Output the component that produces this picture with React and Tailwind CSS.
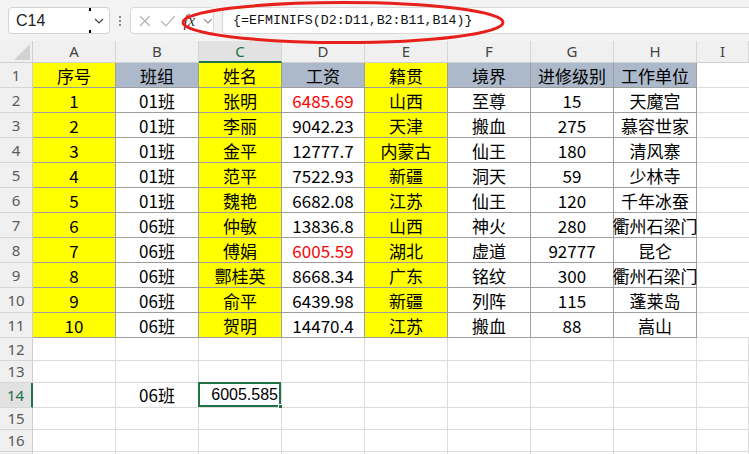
import React from "react";

const cjk = { fontFamily: '"Noto Sans CJK SC", "Noto Sans", sans-serif' };

const data = [
  ["序号", "班组", "姓名", "工资", "籍贯", "境界", "进修级别", "工作单位"],
  ["1", "01班", "张明", "6485.69", "山西", "至尊", "15", "天魔宫"],
  ["2", "01班", "李丽", "9042.23", "天津", "搬血", "275", "慕容世家"],
  ["3", "01班", "金平", "12777.7", "内蒙古", "仙王", "180", "清风寨"],
  ["4", "01班", "范平", "7522.93", "新疆", "洞天", "59", "少林寺"],
  ["5", "01班", "魏艳", "6682.08", "江苏", "仙王", "120", "千年冰蚕"],
  ["6", "06班", "仲敏", "13836.8", "山西", "神火", "280", "衢州石梁门"],
  ["7", "06班", "傅娟", "6005.59", "湖北", "虚道", "92777", "昆仑"],
  ["8", "06班", "酆桂英", "8668.34", "广东", "铭纹", "300", "衢州石梁门"],
  ["9", "06班", "俞平", "6439.98", "新疆", "列阵", "115", "蓬莱岛"],
  ["10", "06班", "贺明", "14470.4", "江苏", "搬血", "88", "嵩山"],
];

const letters = ["A", "B", "C", "D", "E", "F", "G", "H", "I"];
const yellowCols = [0, 2, 4];

// background for table cells
const cellBg = (r, c) => {
  if (yellowCols.includes(c)) return "bg-[#ffff00]";
  if (r === 0) return "bg-[#acb9ca]";
  return "bg-white";
};

const RowHead = ({ n, h, active }) => (
  <div
    className={`w-[33px] shrink-0 ${h} flex items-center justify-center text-[15px] border-b border-[#d6d6d6] ${
      active
        ? "bg-[#e2e2e2] text-[#217346] border-r-2 border-r-[#217346]"
        : "bg-[#f0f0f0] text-[#5a5a5a] border-r border-r-[#cfcfcf]"
    }`}
    style={{ fontFamily: '"Noto Sans", sans-serif' }}
  >
    {n}
  </div>
);

const TableRow = ({ r }) => (
  <div className="flex h-[25px]">
    <RowHead n={r + 1} h="h-[25px]" />
    {data[r].map((t, c) => (
      <div
        key={c}
        className={`w-[83px] shrink-0 h-full flex items-center justify-center whitespace-nowrap text-[17px] leading-none border-r border-b border-[#9e9e9e] ${cellBg(r, c)} ${
          c === 3 && (r === 1 || r === 7) ? "text-[#ff0000]" : "text-black"
        }`}
      >
        {t}
      </div>
    ))}
    <div className="flex-1 h-full bg-white border-b border-[#dcdcdc]" />
  </div>
);

const EmptyRow = ({ n, h, children }) => (
  <div className={`flex ${h}`}>
    <RowHead n={n} h={h} active={n === 14} />
    {letters.map((l, c) => (
      <div
        key={l}
        className={`${c === 8 ? "flex-1" : "w-[83px] shrink-0"} relative h-full bg-white border-r border-b border-[#dcdcdc] flex items-center`}
      >
        {children && children[c]}
      </div>
    ))}
  </div>
);

export default function App() {
  return (
    <div className="w-[749px] h-[454px] overflow-hidden bg-white relative" style={cjk}>
      {/* formula bar */}
      <div className="h-[41px] bg-[#f3f3f3] flex items-center pl-[8px] gap-[8px] relative">
        <div className="w-[102px] h-[27px] bg-white border border-[#d2d2d2] rounded-[4px] flex items-center">
          <span className="flex-1 pl-[7px] text-[16px] text-[#222]" style={{ fontFamily: '"Liberation Sans", sans-serif' }}>
            C14
          </span>
          <div className="relative w-[20px] h-full flex items-center justify-center">
            <div className="absolute left-0 top-0 w-[2px] h-[3px] bg-black" />
            <div className="absolute left-0 bottom-0 w-[2px] h-[3px] bg-black" />
            <svg width="10" height="6" viewBox="0 0 10 6">
              <polyline points="1,1 5,5 9,1" fill="none" stroke="#444" strokeWidth="1.2" />
            </svg>
          </div>
        </div>
        <div className="flex flex-col gap-[2px] mx-[1px]">
          <div className="w-[2px] h-[2px] bg-[#8a8a8a]" />
          <div className="w-[2px] h-[2px] bg-[#8a8a8a]" />
          <div className="w-[2px] h-[2px] bg-[#8a8a8a]" />
        </div>
        <div className="w-[84px] h-[27px] bg-white border border-[#d9d9d9] rounded-[4px] flex items-center pl-[7px] gap-[8px]">
          <svg width="14" height="14" viewBox="0 0 14 14">
            <path d="M2 2 L12 12 M12 2 L2 12" stroke="#b4b4b4" strokeWidth="1.3" />
          </svg>
          <svg width="16" height="14" viewBox="0 0 16 14">
            <polyline points="1,7 6,12 15,2" fill="none" stroke="#b4b4b4" strokeWidth="1.3" />
          </svg>
          <span className="text-[16px] italic text-[#333] leading-none" style={{ fontFamily: '"Liberation Serif", serif' }}>
            fx
          </span>
          <svg width="10" height="6" viewBox="0 0 10 6">
            <polyline points="1,1 5,5 9,1" fill="none" stroke="#888" strokeWidth="1.1" />
          </svg>
        </div>
        <div className="flex-1 h-[27px] bg-white border-y border-l border-[#d9d9d9] rounded-l-[4px] flex items-center pl-[10px]">
          <span className="text-[13.3px] text-[#111]" style={{ fontFamily: '"Liberation Mono", monospace' }}>
            {"{=EFMINIFS(D2:D11,B2:B11,B14)}"}
          </span>
        </div>
        <svg className="absolute left-[180px] top-0" width="330" height="46" viewBox="0 0 330 46">
          <ellipse cx="163" cy="22.5" rx="160" ry="20" fill="none" stroke="#e8201c" strokeWidth="3" />
        </svg>
      </div>

      {/* column headers */}
      <div className="flex h-[22px]">
        <div className="w-[33px] shrink-0 h-full bg-[#f0f0f0] border-r border-b border-[#cfcfcf] relative">
          <svg className="absolute right-[2px] bottom-[2px]" width="16" height="16" viewBox="0 0 16 16">
            <polygon points="16,0 16,16 0,16" fill="#d2d2d2" />
          </svg>
        </div>
        {letters.map((l, c) => (
          <div
            key={l}
            className={`${c === 8 ? "flex-1" : "w-[83px] shrink-0"} h-full flex items-center justify-center text-[15px] border-r border-[#d6d6d6] ${
              c === 2
                ? "bg-[#e2e2e2] text-[#217346] border-b-2 border-b-[#217346]"
                : "bg-[#f0f0f0] text-[#444] border-b border-b-[#cfcfcf]"
            }`}
            style={{ fontFamily: '"Noto Sans", sans-serif' }}
          >
            {l}
          </div>
        ))}
      </div>

      {data.map((_, r) => (
        <TableRow key={r} r={r} />
      ))}

      <EmptyRow n={12} h="h-[23px]" />
      <EmptyRow n={13} h="h-[22px]" />
      <EmptyRow
        n={14}
        h="h-[25px]"
        children={[
          null,
          <span key="b" className="w-full text-center text-[17px] text-black">06班</span>,
          <>
            <span
              key="c"
              className="w-full text-right pr-[3px] text-[16px] text-black"
              style={{ fontFamily: '"Liberation Sans", sans-serif' }}
            >
              6005.585
            </span>
            <div className="absolute -left-[1px] -top-[1px] -right-[0px] -bottom-[0px] border-2 border-[#217346] pointer-events-none" />
            <div className="absolute -right-[3px] -bottom-[3px] w-[6px] h-[6px] bg-[#217346] border border-white" />
          </>,
        ]}
      />
      <EmptyRow n={15} h="h-[22px]" />
      <EmptyRow n={16} h="h-[22px]" />
      <EmptyRow n="" h="h-[22px]" />
    </div>
  );
}
